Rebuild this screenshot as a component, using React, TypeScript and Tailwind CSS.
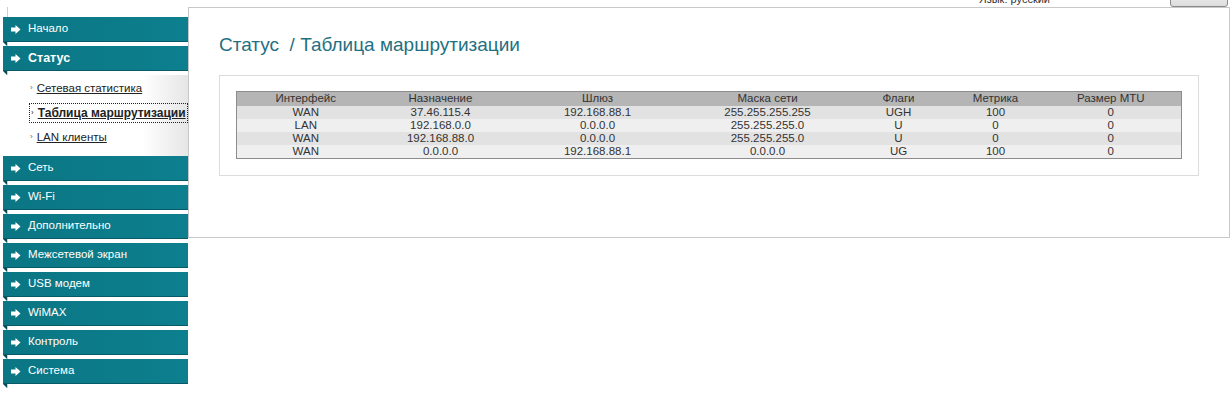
const menuTop = ['Начало', 'Статус'];
const menuBottom = ['Сеть', 'Wi-Fi', 'Дополнительно', 'Межсетевой экран', 'USB модем', 'WiMAX', 'Контроль', 'Система'];

const subItems = [
  { label: 'Сетевая статистика', active: false },
  { label: 'Таблица маршрутизации', active: true },
  { label: 'LAN клиенты', active: false },
];

const columns = [
  { title: 'Интерфейс', width: 'w-[138px]' },
  { title: 'Назначение', width: 'w-[132px]' },
  { title: 'Шлюз', width: 'w-[182px]' },
  { title: 'Маска сети', width: 'w-[158px]' },
  { title: 'Флаги', width: 'w-[104px]' },
  { title: 'Метрика', width: 'w-[90px]' },
  { title: 'Размер MTU', width: 'w-[141px]' },
];

const routes = [
  ['WAN', '37.46.115.4', '192.168.88.1', '255.255.255.255', 'UGH', '100', '0'],
  ['LAN', '192.168.0.0', '0.0.0.0', '255.255.255.0', 'U', '0', '0'],
  ['WAN', '192.168.88.0', '0.0.0.0', '255.255.255.0', 'U', '0', '0'],
  ['WAN', '0.0.0.0', '192.168.88.1', '0.0.0.0', 'UG', '100', '0'],
];

function Arrow() {
  return (
    <svg width="10" height="9" viewBox="0 0 10 9" className="shrink-0">
      <polygon points="0,2.5 4.5,2.5 4.5,0 9.5,4.5 4.5,9 4.5,6.5 0,6.5" fill="#fff" />
    </svg>
  );
}

function Fold() {
  return (
    <div className="h-[4px]">
      <svg width="5" height="4" viewBox="0 0 5 4" className="block">
        <polygon points="0,0 4,0 4,4" fill="#0a4a54" />
      </svg>
    </div>
  );
}

function MenuItem({ label, bold }: { label: string; bold?: boolean }) {
  return (
    <div className="-ml-[5px]">
      <div
        className={`h-[25px] w-[185px] flex items-center gap-[7px] pl-[8px] bg-gradient-to-r from-[#0b7684] to-[#0d7f8e] border-b border-[#075a66] text-white ${
          bold ? 'font-bold text-[12.5px]' : 'text-[11.5px]'
        }`}
      >
        <Arrow />
        <span>{label}</span>
      </div>
      <Fold />
    </div>
  );
}

export default function App() {
  return (
    <div className="w-[1232px] h-[393px] bg-white overflow-hidden" style={{ fontFamily: '"Liberation Sans", Arial, sans-serif' }}>
      <div className="h-[7px] overflow-hidden flex justify-end pr-[4px]">
        <div className="flex items-end -mt-[12px] gap-[120px] text-[11px] text-[#333]">
          <span>Язык: русский</span>
          <div className="w-[58px] h-[18px] rounded-[3px] border border-[#8a8a8a] bg-gradient-to-b from-[#f4f4f4] to-[#dcdcdc]" />
        </div>
      </div>

      <div className="flex">
        {/* Sidebar */}
        <div className="w-[181px] ml-[7px] border-l border-[#cfcfcf] pt-[10px] shrink-0">
          {menuTop.map((m, i) => (
            <MenuItem key={m} label={m} bold={i === 1} />
          ))}
          <div className="h-[81px] -ml-[5px] w-[185px] bg-gradient-to-r from-white via-white via-75% to-[#e6e6e6] pt-[1px] text-[11.5px] text-[#222]">
            {subItems.map((s) => (
              <div key={s.label} className="h-[24.5px] flex items-center pl-[27px]">
                <span
                  className={`flex items-center gap-[4px] ${
                    s.active ? 'font-bold outline outline-1 outline-dotted outline-[#222] px-[1px] text-[12px]' : ''
                  }`}
                >
                  <span className="text-[8px] text-[#666]">›</span>
                  <span className="underline">{s.label}</span>
                </span>
              </div>
            ))}
          </div>
          {menuBottom.map((m) => (
            <MenuItem key={m} label={m} />
          ))}
        </div>

        {/* Main panel */}
        <div className="flex-1 mr-[4px] h-[231px] border border-[#c8c8c8] pl-[30px] pr-[30px] pt-[25px]">
          <h1 className="text-[19px] text-[#1f7082] leading-[24px] mb-[18px] whitespace-pre">Статус  / Таблица маршрутизации</h1>
          <div className="border border-[#dcdcdc] h-[101px] pt-[15px] px-[16px]">
            <table className="border-collapse border border-[#8c8c8c] text-[11.5px] text-[#333] w-[945px] table-fixed">
              <thead>
                <tr className="bg-[#b5b5b5] h-[14px] leading-[13px]">
                  {columns.map((c) => (
                    <th key={c.title} className={`${c.width} font-normal text-center p-0`}>
                      {c.title}
                    </th>
                  ))}
                </tr>
              </thead>
              <tbody>
                {routes.map((r, i) => (
                  <tr key={i} className={`${i % 2 === 0 ? 'bg-[#e2e2e2]' : 'bg-[#efefef]'} h-[13px] leading-[13px]`}>
                    {r.map((v, j) => (
                      <td key={j} className="text-center p-0">
                        {v}
                      </td>
                    ))}
                  </tr>
                ))}
              </tbody>
            </table>
          </div>
        </div>
      </div>
    </div>
  );
}
